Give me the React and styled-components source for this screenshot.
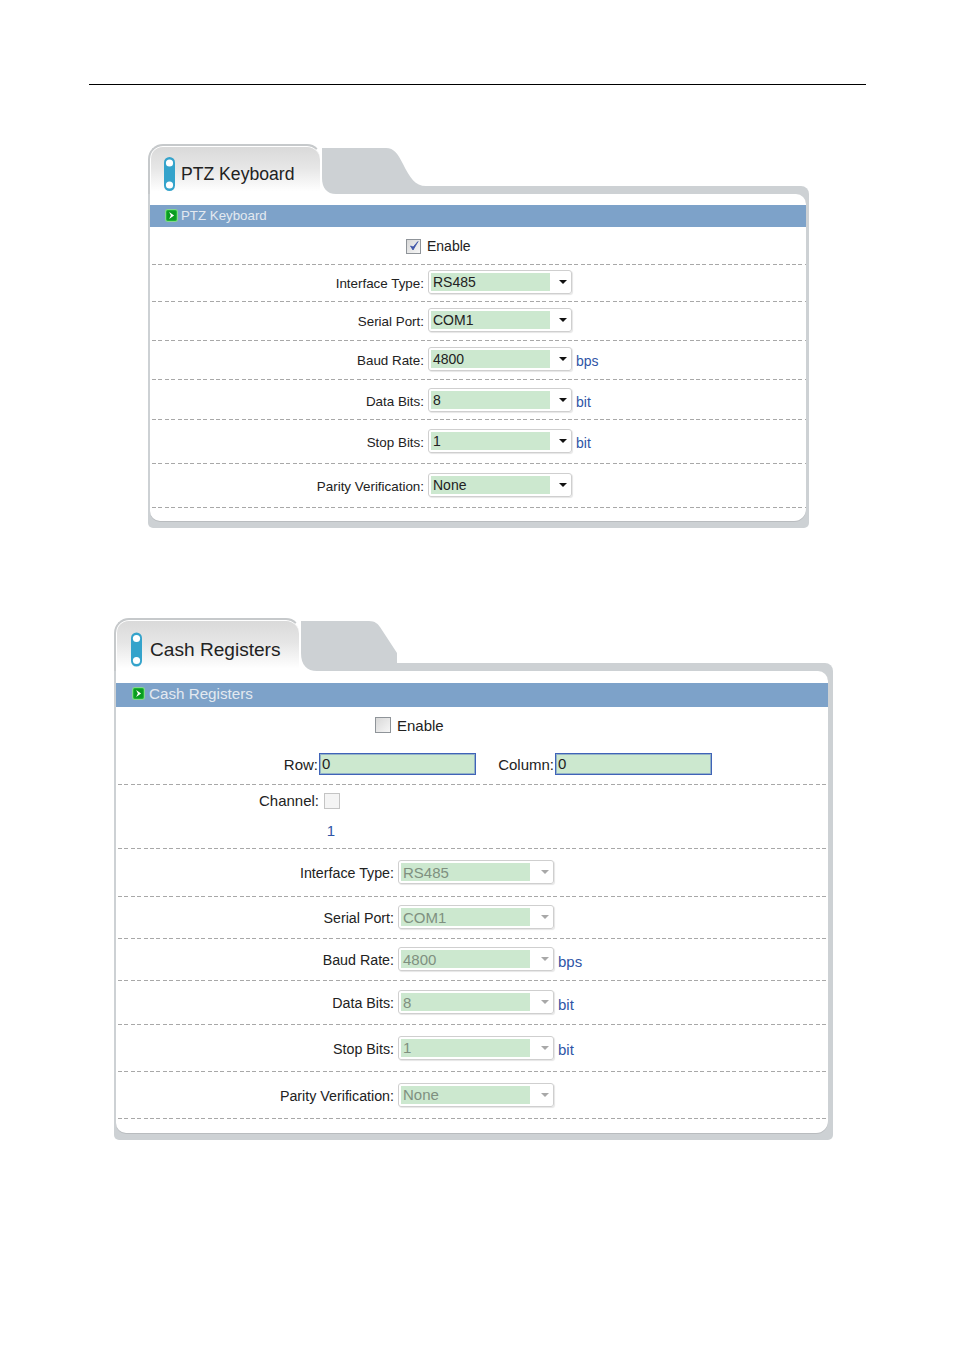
import styled, { createGlobalStyle } from 'styled-components';

const GlobalStyle = createGlobalStyle`
  body {
    margin: 0;
    background: #fff;
    font-family: "Liberation Sans", Arial, sans-serif;
  }
`;

const keyboardRows = [
  { label: 'Interface Type:', value: 'RS485', height: 37, pad: 3 },
  { label: 'Serial Port:', value: 'COM1', height: 39, pad: 3 },
  { label: 'Baud Rate:', value: '4800', unit: 'bps', height: 39, pad: 3 },
  { label: 'Data Bits:', value: '8', unit: 'bit', height: 40, pad: 0 },
  { label: 'Stop Bits:', value: '1', unit: 'bit', height: 44, pad: 2 },
  { label: 'Parity Verification:', value: 'None', height: 44, pad: 2 },
];

const cashRows = [
  { label: 'Interface Type:', value: 'RS485', height: 48, pad: 2 },
  { label: 'Serial Port:', value: 'COM1', height: 42, pad: 2 },
  { label: 'Baud Rate:', value: '4800', unit: 'bps', height: 42, pad: 2 },
  { label: 'Data Bits:', value: '8', unit: 'bit', height: 44, pad: 2 },
  { label: 'Stop Bits:', value: '1', unit: 'bit', height: 47, pad: 2 },
  { label: 'Parity Verification:', value: 'None', height: 47, pad: 2 },
];

function PillIcon({ height }) {
  return (
    <svg width="11" height={height} viewBox="0 0 11 34">
      <rect x="0" y="0" width="11" height="34" rx="5.5" fill="#34a3cb" />
      <circle cx="5.5" cy="6" r="3.6" fill="#fff" />
      <circle cx="5.5" cy="28" r="3.6" fill="#fff" />
    </svg>
  );
}

function ArrowIcon() {
  return (
    <svg width="13" height="13" viewBox="0 0 12 12">
      <rect x="0.5" y="0.5" width="11" height="11" rx="2" fill="#1cb531" stroke="#86d690" />
      <rect x="2" y="2" width="8" height="8" fill="#0a9a20" />
      <path d="M3.8 2.8 L8.4 6 L3.8 9.2 L5.4 6 Z" fill="#fff" />
    </svg>
  );
}

function CheckIcon() {
  return (
    <svg width="12" height="12" viewBox="0 0 12 12">
      <path d="M2.5 6 L5 10 L10 1.5 L5.2 7 Z" fill="#3f55a8" stroke="#3f55a8" strokeWidth="0.8" />
    </svg>
  );
}

function Tab({ title, shoulder, shoulderWidth, shoulderHeight, pillHeight }) {
  return (
    <TabRow>
      <ActiveTab>
        <PillIcon height={pillHeight} />
        <TabTitle>{title}</TabTitle>
      </ActiveTab>
      <svg width={shoulderWidth} height={shoulderHeight} viewBox={`0 0 ${shoulderWidth} ${shoulderHeight}`}>
        <path d={shoulder} fill="#cdd1d4" />
      </svg>
      <TabBand />
    </TabRow>
  );
}

function SelectRow({ row, labelWidth, selectWidth, disabled }) {
  return (
    <Row $height={row.height} $pad={row.pad}>
      <Label $width={labelWidth} $lower>{row.label}</Label>
      <SelectBox $width={selectWidth}>
        <SelectValue $disabled={disabled}>{row.value}</SelectValue>
        <Caret $disabled={disabled} />
      </SelectBox>
      {row.unit && <Unit>{row.unit}</Unit>}
    </Row>
  );
}

function EnableRow({ labelWidth, height, pad, checked, plain, boxSize }) {
  return (
    <Row $height={height} $pad={pad} $plain={plain}>
      <CheckCell $width={labelWidth}>
        <CheckBox $size={boxSize}>{checked && <CheckIcon />}</CheckBox>
      </CheckCell>
      <EnableText>Enable</EnableText>
    </Row>
  );
}

export default function App() {
  return (
    <Page>
      <GlobalStyle />
      <TopRule />

      <KeyboardPanel>
        <Tab
          title="PTZ Keyboard"
          pillHeight={34}
          shoulderWidth={104}
          shoulderHeight={46}
          shoulder="M0 0 H64 C72 0 76 6 81 16 C88 30 93 38 104 38 V46 H14 C5 46 0 40 0 30 Z"
        />
        <KeyboardFrame>
          <FrameInner>
            <SectionBar $top={11} $height={22}>
              <ArrowIcon />
              <span>PTZ Keyboard</span>
            </SectionBar>
            <EnableRow labelWidth={274} height={38} pad={0} checked boxSize={15} />
            {keyboardRows.map((row) => (
              <SelectRow key={row.label} row={row} labelWidth={274} selectWidth={144} />
            ))}
            <FrameFoot $height={13} />
          </FrameInner>
        </KeyboardFrame>
      </KeyboardPanel>

      <CashPanel>
        <Tab
          title="Cash Registers"
          pillHeight={37}
          shoulderWidth={97}
          shoulderHeight={50}
          shoulder="M0 0 H68 C74 0 77 3 79 6 L96 32 V42 H97 V50 H16 C6 50 0 44 0 32 Z"
        />
        <CashFrame>
          <FrameInner>
            <SectionBar $top={12} $height={24}>
              <ArrowIcon />
              <span>Cash Registers</span>
            </SectionBar>
            <EnableRow labelWidth={278} height={38} pad={2} plain boxSize={16} />
            <Row $height={40} $pad={2}>
              <Label $width={200} $tight $full>Row:</Label>
              <TextInput>0</TextInput>
              <Label $width={78} $tight $full>Column:</Label>
              <TextInput>0</TextInput>
            </Row>
            <ChannelRow>
              <ChannelLine>
                <Label $width={203} $full>Channel:</Label>
                <CheckBox $size={16} $flat />
              </ChannelLine>
              <ChannelNumber>1</ChannelNumber>
            </ChannelRow>
            {cashRows.map((row) => (
              <SelectRow key={row.label} row={row} labelWidth={278} selectWidth={156} disabled />
            ))}
            <FrameFoot $height={14} />
          </FrameInner>
        </CashFrame>
      </CashPanel>
    </Page>
  );
}

const dashedLine = `
  background-image: repeating-linear-gradient(90deg, #a8a8a8 0 4px, transparent 4px 6.4px);
  background-size: 100% 1px;
  background-position: left bottom;
  background-repeat: no-repeat;
`;

const Page = styled.div`
  width: 955px;
  min-height: 1350px;
  padding-top: 84px;
  box-sizing: border-box;
  color: #222;
`;

const TopRule = styled.div`
  width: 777px;
  height: 1px;
  margin-left: 89px;
  background: #000;
`;

const KeyboardPanel = styled.section`
  width: 661px;
  margin: 59px 0 0 148px;
  font-size: 14px;
  --tab-height: 50px;
  --tab-width: 174px;
  --title-size: 17.6px;
  --bar-size: 13.3px;
  --bar-gap: 3px;
  --bar-pad: 15px;
  --bar-lift: 2px;
  --tab-pad: 14px;
  --title-gap: 6px;
  --label-size: 13.4px;
  --caret-gap: 9px;
`;

const CashPanel = styled.section`
  width: 719px;
  margin: 90px 0 0 114px;
  font-size: 15px;
  --tab-height: 53px;
  --tab-width: 187px;
  --title-size: 19.1px;
  --bar-size: 15.2px;
  --bar-gap: 4px;
  --bar-pad: 16px;
  --bar-lift: 3px;
  --tab-pad: 15px;
  --title-gap: 8px;
  --label-size: 14.25px;
  --caret-gap: 11px;
`;

const TabRow = styled.div`
  display: flex;
  align-items: flex-end;
  height: var(--tab-height);
`;

const ActiveTab = styled.div`
  display: flex;
  align-items: center;
  gap: var(--title-gap);
  flex: none;
  box-sizing: border-box;
  width: var(--tab-width);
  height: 100%;
  padding: 8px 0 0 var(--tab-pad);
  border: 2px solid #c6c9cb;
  border-bottom: 0;
  border-right-color: #fff;
  border-radius: 15px 15px 0 0;
  box-shadow: inset 0 1px 0 #fff, inset 1px 0 0 #fff;
  background: linear-gradient(#d9d9d9, #e6e6e6 45%, #fff 95%);
`;

const TabTitle = styled.span`
  font-size: var(--title-size);
  color: #222;
  white-space: nowrap;
`;

const TabBand = styled.div`
  flex: 1;
  height: 8px;
  background: #cdd1d4;
  border-radius: 0 8px 0 0;
`;

const KeyboardFrame = styled.div`
  padding: 0 3px 7px 2px;
  background: #cdd1d4;
  border-radius: 0 0 5px 5px;
`;

const CashFrame = styled.div`
  padding: 0 5px 7px 2px;
  background: #cdd1d4;
  border-radius: 0 0 5px 5px;
`;

const FrameInner = styled.div`
  background: #fff;
  border-radius: 0 10px 12px 10px;
  box-shadow: 0 1px 0 #b9bcbf;
  overflow: hidden;
`;

const SectionBar = styled.div`
  display: flex;
  align-items: center;
  gap: var(--bar-gap);
  box-sizing: border-box;
  height: ${(p) => p.$height}px;
  margin-top: ${(p) => p.$top}px;
  padding: 0 0 var(--bar-lift) var(--bar-pad);
  background: #7da2c9;
  color: #e3e9f0;
  font-size: var(--bar-size);
`;

const Row = styled.div`
  display: flex;
  align-items: center;
  box-sizing: border-box;
  height: ${(p) => p.$height}px;
  margin: 0 0 0 2px;
  padding-bottom: ${(p) => p.$pad}px;
  ${(p) => (p.$plain ? '' : dashedLine)}
`;

const Label = styled.div`
  flex: none;
  box-sizing: border-box;
  width: ${(p) => p.$width}px;
  margin-top: ${(p) => (p.$lower ? '2px' : '0')};
  padding-right: ${(p) => (p.$tight ? '0' : '2px')};
  font-size: ${(p) => (p.$full ? 'inherit' : 'var(--label-size)')};
  text-align: right;
  white-space: nowrap;
`;

const CheckCell = styled.div`
  display: flex;
  justify-content: flex-end;
  flex: none;
  box-sizing: border-box;
  width: ${(p) => p.$width}px;
  padding-right: 5px;
`;

const CheckBox = styled.span`
  display: flex;
  align-items: center;
  justify-content: center;
  flex: none;
  box-sizing: border-box;
  width: ${(p) => p.$size}px;
  height: ${(p) => p.$size}px;
  margin-left: ${(p) => (p.$flat ? '3px' : '0')};
  border: 1px solid ${(p) => (p.$flat ? '#c4c4c4' : '#8f9499')};
  background: ${(p) => (p.$flat ? '#f4f4f4' : 'linear-gradient(135deg, #d8d8d8, #f6f6f6)')};
`;

const EnableText = styled.span`
  margin-left: 1px;
`;

const SelectBox = styled.div`
  display: flex;
  align-items: center;
  flex: none;
  box-sizing: border-box;
  width: ${(p) => p.$width}px;
  height: 24px;
  margin-left: 2px;
  padding: 2px 0 2px 2px;
  border: 1px solid #cfcfcf;
  border-radius: 3px;
  box-shadow: 1px 1px 1px #e6e6e6;
`;

const SelectValue = styled.div`
  flex: 1;
  align-self: stretch;
  display: flex;
  align-items: center;
  padding-left: 2px;
  background: #cce8cf;
  color: ${(p) => (p.$disabled ? '#7f9080' : '#222')};
`;

const Caret = styled.span`
  flex: none;
  width: 0;
  height: 0;
  margin: 0 4px 0 var(--caret-gap);
  border-style: solid;
  border-width: 4px 4.5px 0;
  border-color: ${(p) => (p.$disabled ? '#a8a8a8' : '#111')} transparent transparent;
`;

const Unit = styled.span`
  margin: 4px 0 0 4px;
  color: #2f55a6;
`;

const TextInput = styled.div`
  display: flex;
  align-items: center;
  flex: none;
  box-sizing: border-box;
  width: 157px;
  height: 22px;
  margin-left: 1px;
  padding: 0 0 1px 2px;
  border: 1px solid #3f63b8;
  box-shadow: inset 0 0 0 1px rgba(63, 99, 184, 0.4);
  background: #cce8cf;
`;

const ChannelRow = styled.div`
  box-sizing: border-box;
  height: 64px;
  margin: 0 0 0 2px;
  padding-top: 7px;
  ${dashedLine}
`;

const ChannelLine = styled.div`
  display: flex;
  align-items: center;
`;

const ChannelNumber = styled.div`
  width: 217px;
  margin-top: 13px;
  text-align: right;
  color: #2f55a6;
`;

const FrameFoot = styled.div`
  height: ${(p) => p.$height}px;
`;
